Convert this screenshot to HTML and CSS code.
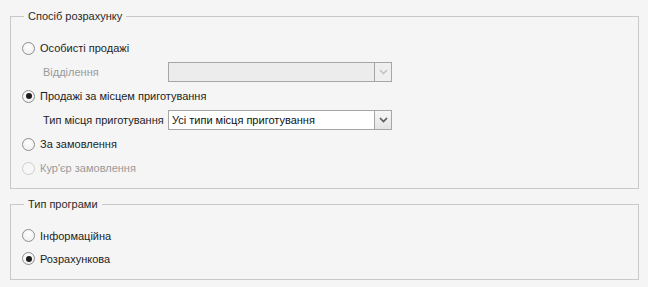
FILE: index.html
```html
<!DOCTYPE html>
<html lang="uk">
<head>
    <meta charset="UTF-8">
    <title>Налаштування розрахунку</title>
    <link rel="stylesheet" href="styles.css">
</head>
<body>
    <div class="settings">
        <fieldset class="group">
            <legend>Спосіб розрахунку</legend>
            <div class="row">
                <span class="radio"></span>
                <span class="caption">Особисті продажі</span>
            </div>
            <div class="row sub">
                <span class="label disabled">Відділення</span>
                <div class="select disabled">
                    <span class="value"></span>
                    <span class="arrow"><svg width="9" height="6" viewBox="0 0 9 6"><path d="M1 1 L4.5 4.5 L8 1" fill="none" stroke="currentColor" stroke-width="1.6"/></svg></span>
                </div>
            </div>
            <div class="row">
                <span class="radio checked"></span>
                <span class="caption">Продажі за місцем приготування</span>
            </div>
            <div class="row sub">
                <span class="label">Тип місця приготування</span>
                <div class="select">
                    <span class="value">Усі типи місця приготування</span>
                    <span class="arrow"><svg width="9" height="6" viewBox="0 0 9 6"><path d="M1 1 L4.5 4.5 L8 1" fill="none" stroke="currentColor" stroke-width="1.6"/></svg></span>
                </div>
            </div>
            <div class="row">
                <span class="radio"></span>
                <span class="caption">За замовлення</span>
            </div>
            <div class="row disabled">
                <span class="radio"></span>
                <span class="caption">Кур'єр замовлення</span>
            </div>
        </fieldset>

        <fieldset class="group program">
            <legend>Тип програми</legend>
            <div class="row">
                <span class="radio"></span>
                <span class="caption">Інформаційна</span>
            </div>
            <div class="row">
                <span class="radio checked"></span>
                <span class="caption">Розрахункова</span>
            </div>
        </fieldset>
    </div>
</body>
</html>
```
FILE: styles.css
```css
body {
    margin: 0;
    background: #f5f5f5;
    font-family: 'Liberation Sans', Arial, sans-serif;
    font-size: 11px;
    color: #1e1e1e;
}
.settings {
    padding: 9px 9px 0 10px;
    display: flex;
    flex-direction: column;
    gap: 8px;
}
.group {
    margin: 0;
    border: 1px solid #c9c9c9;
    padding: 13px 10px 8px 10px;
    display: flex;
    flex-direction: column;
}
.group.program {
    padding-bottom: 9px;
}
.group.program .row {
    height: 23px;
}
legend {
    margin-left: 3px;
    padding: 0 4px;
    line-height: 14px;
    color: #2a2a2a;
}
.row {
    height: 24px;
    display: flex;
    align-items: center;
    white-space: nowrap;
}
.row.sub {
    padding-left: 22px;
}
.radio {
    width: 11px;
    height: 11px;
    margin-left: 1px;
    margin-right: 5px;
    border: 1px solid #8e8e8e;
    border-radius: 50%;
    background: radial-gradient(circle at 50% 35%, #ffffff, #ececec);
    display: flex;
    align-items: center;
    justify-content: center;
}
.radio.checked::after {
    content: '';
    width: 6px;
    height: 6px;
    border-radius: 50%;
    background: #1c1c1c;
}
.row.disabled .radio {
    border-color: #cdcdcd;
    background: #f7f7f7;
}
.row.disabled .caption,
.label.disabled {
    color: #9a9a9a;
}
.label {
    width: 125px;
}
.select {
    width: 222px;
    height: 18px;
    border: 1px solid #a6a6a6;
    background: #fff;
    display: flex;
}
.select.disabled {
    background: #ececec;
}
.select .value {
    flex: 1;
    padding-left: 3px;
    line-height: 18px;
    color: #111;
}
.arrow {
    width: 16px;
    border-left: 1px solid #a6a6a6;
    background: linear-gradient(#f6f6f6, #e4e4e4);
    color: #5a5a5a;
    display: flex;
    align-items: center;
    justify-content: center;
}
.select.disabled .arrow {
    color: #c4c4c4;
    background: #efefef;
}
```
